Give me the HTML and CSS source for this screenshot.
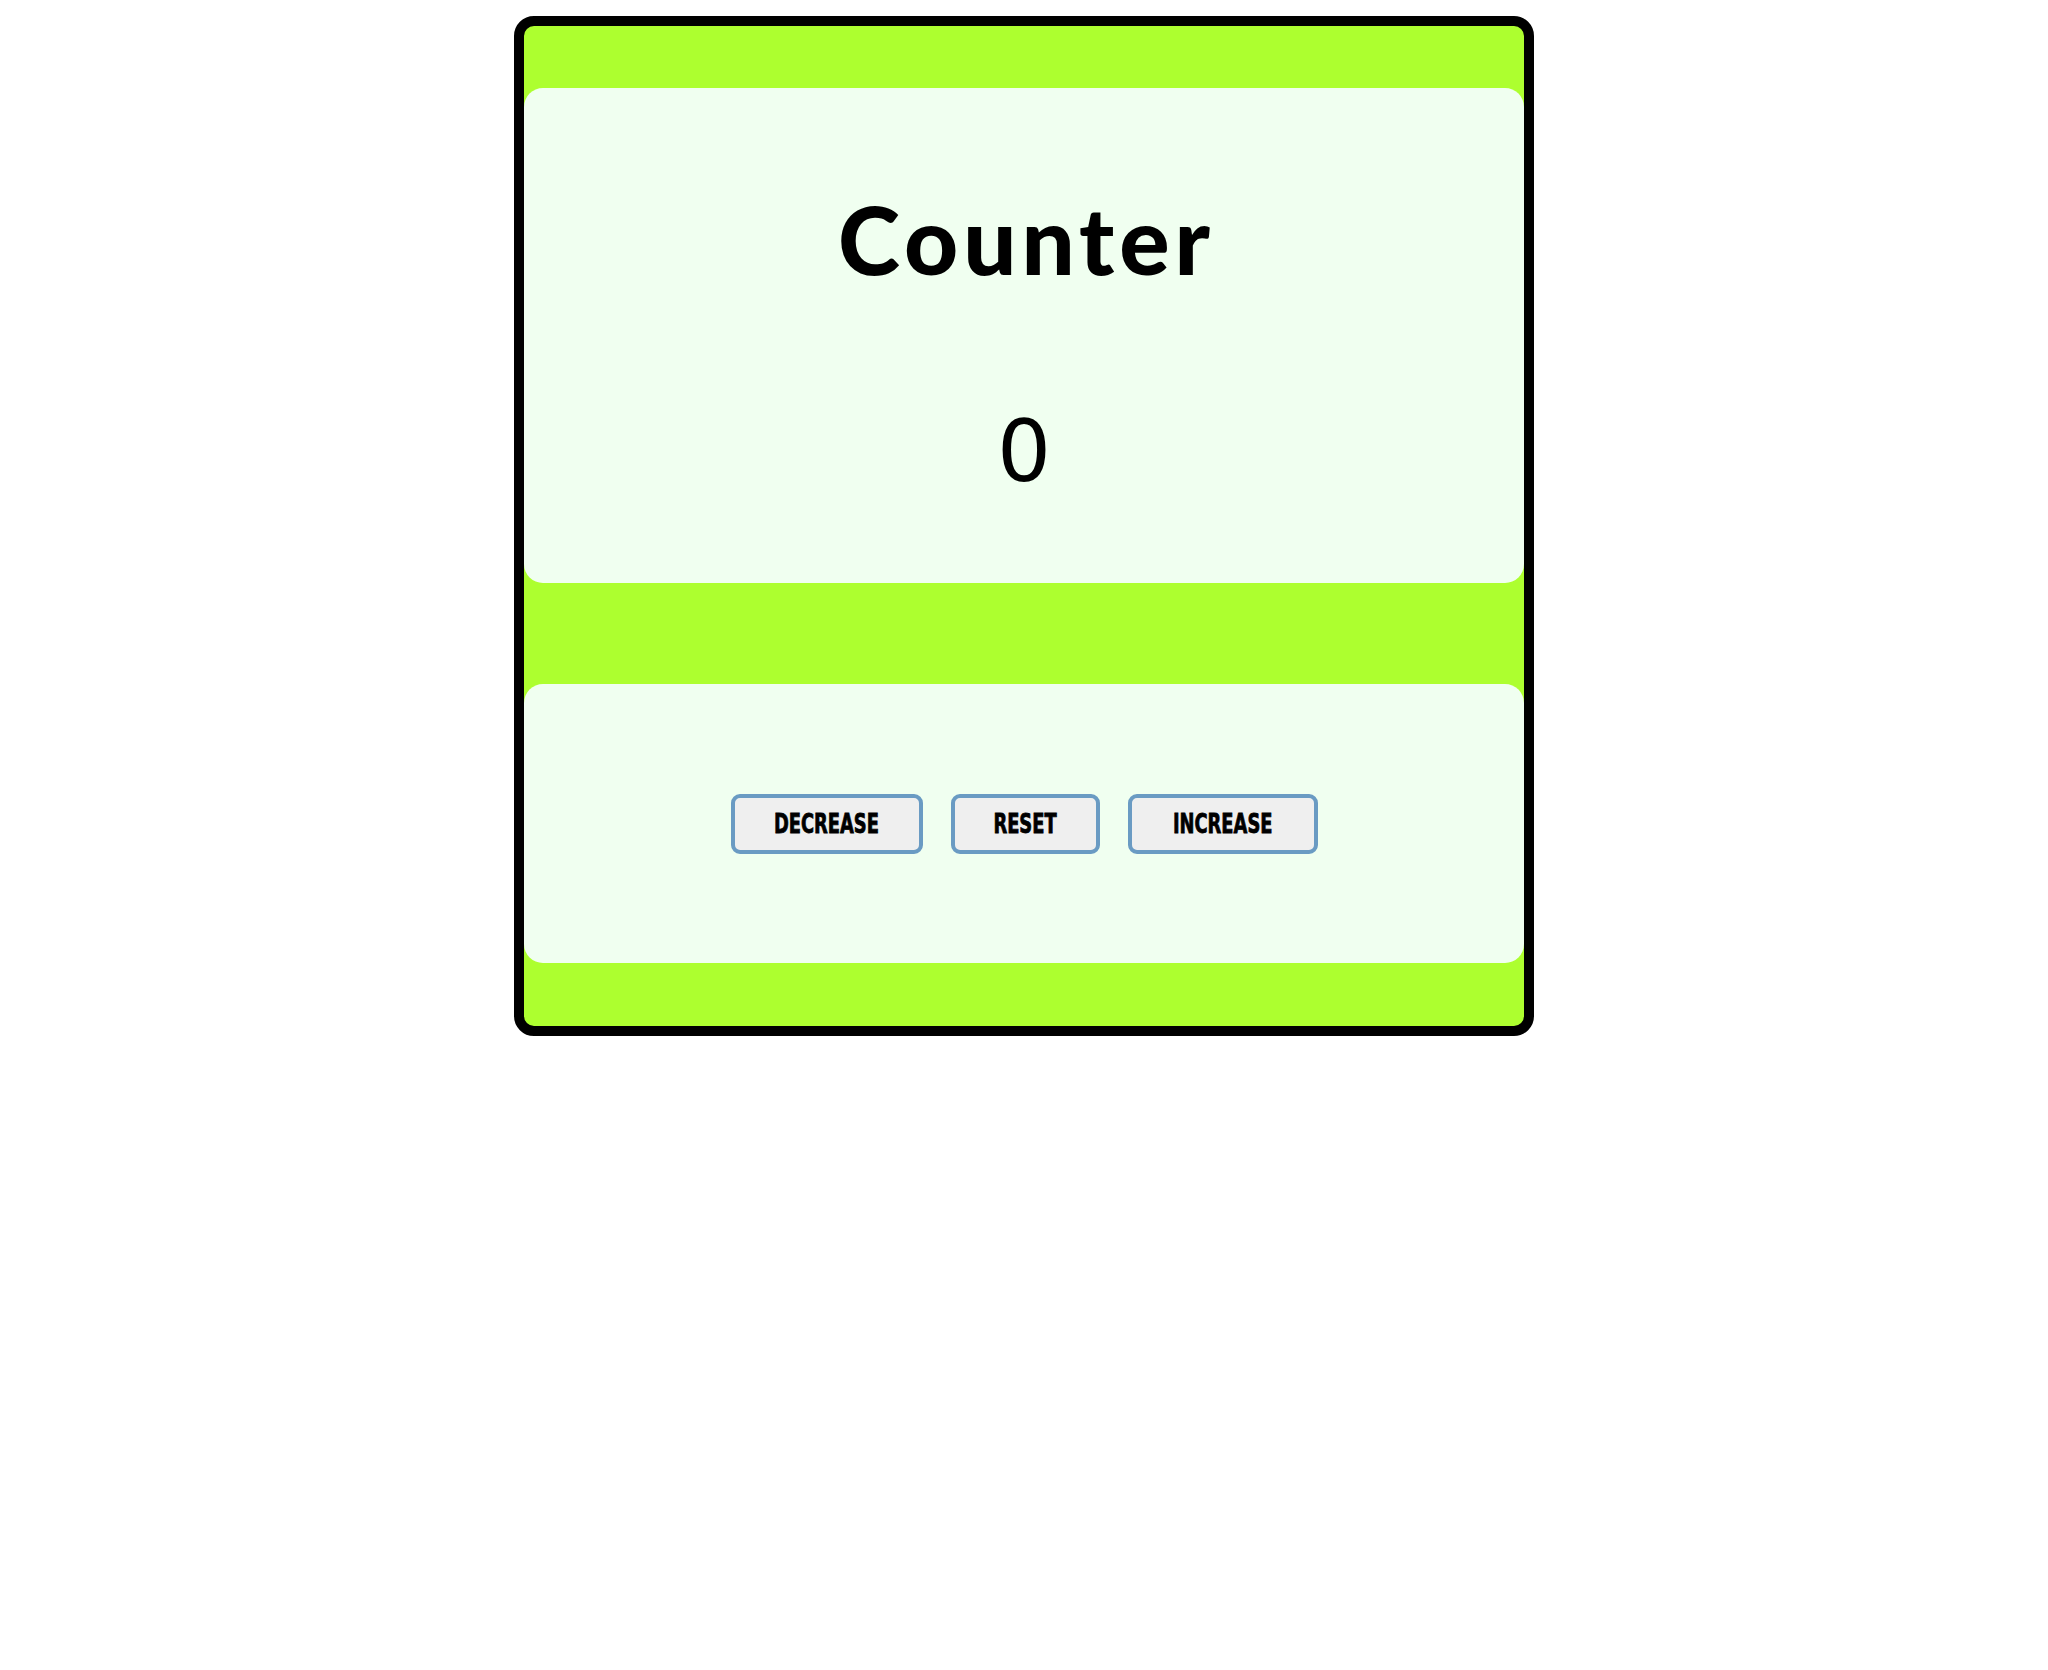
FILE: index.html
```html
<!DOCTYPE html>
<html>
<head>
<meta charset="utf-8">
<title>Counter</title>
<link rel="stylesheet" href="styles.css">
</head>
<body>
<main class="counter-app">
  <section class="panel panel-display">
    <h1 class="title">Counter</h1>
    <p class="value">0</p>
  </section>
  <section class="panel panel-controls">
    <button class="btn btn-decrease"><span class="btn-label">DECREASE</span></button>
    <button class="btn btn-reset"><span class="btn-label">RESET</span></button>
    <button class="btn btn-increase"><span class="btn-label">INCREASE</span></button>
  </section>
</main>
</body>
</html>
```
FILE: styles.css
```css
html, body {
  margin: 0;
  padding: 0;
  background: #ffffff;
}

.counter-app {
  width: 1000px;
  margin: 16px auto 0;
  border: 10px solid #000000;
  border-radius: 20px;
  background: #adff2f;
  padding: 62px 0 63px;
  display: flex;
  flex-direction: column;
  gap: 101px;
}

.panel {
  background: #f0fff0;
  border-radius: 19px;
}

.panel-display {
  height: 495px;
  box-sizing: border-box;
  padding-top: 104px;
  display: flex;
  flex-direction: column;
  align-items: center;
}

.title {
  margin: 0;
  padding-left: 5px;
  font-family: Lato, "Open Sans", sans-serif;
  font-weight: 900;
  font-size: 94px;
  line-height: 94px;
  letter-spacing: 5px;
  color: #000000;
}

.value {
  margin: 123px 0 0;
  font-family: "DejaVu Sans", sans-serif;
  font-weight: normal;
  font-size: 85px;
  line-height: 85px;
  color: #000000;
}

.panel-controls {
  height: 279px;
  box-sizing: border-box;
  display: flex;
  align-items: center;
  justify-content: center;
  gap: 28px;
}

.btn {
  height: 60px;
  box-sizing: border-box;
  border: 4px solid #6a9bc3;
  border-radius: 9px;
  background: #efefef;
  padding: 0;
  display: flex;
  align-items: center;
  justify-content: center;
  overflow: hidden;
  cursor: pointer;
}

.btn-decrease { width: 192px; }
.btn-reset { width: 149px; }
.btn-increase { width: 190px; }

.btn-label {
  display: inline-block;
  font-family: "DejaVu Sans Condensed", "DejaVu Sans", sans-serif;
  font-weight: bold;
  font-size: 27px;
  line-height: 27px;
  color: #000000;
  transform: scaleX(0.735);
  -webkit-text-stroke: 0.8px #000000;
  white-space: nowrap;
}
```
